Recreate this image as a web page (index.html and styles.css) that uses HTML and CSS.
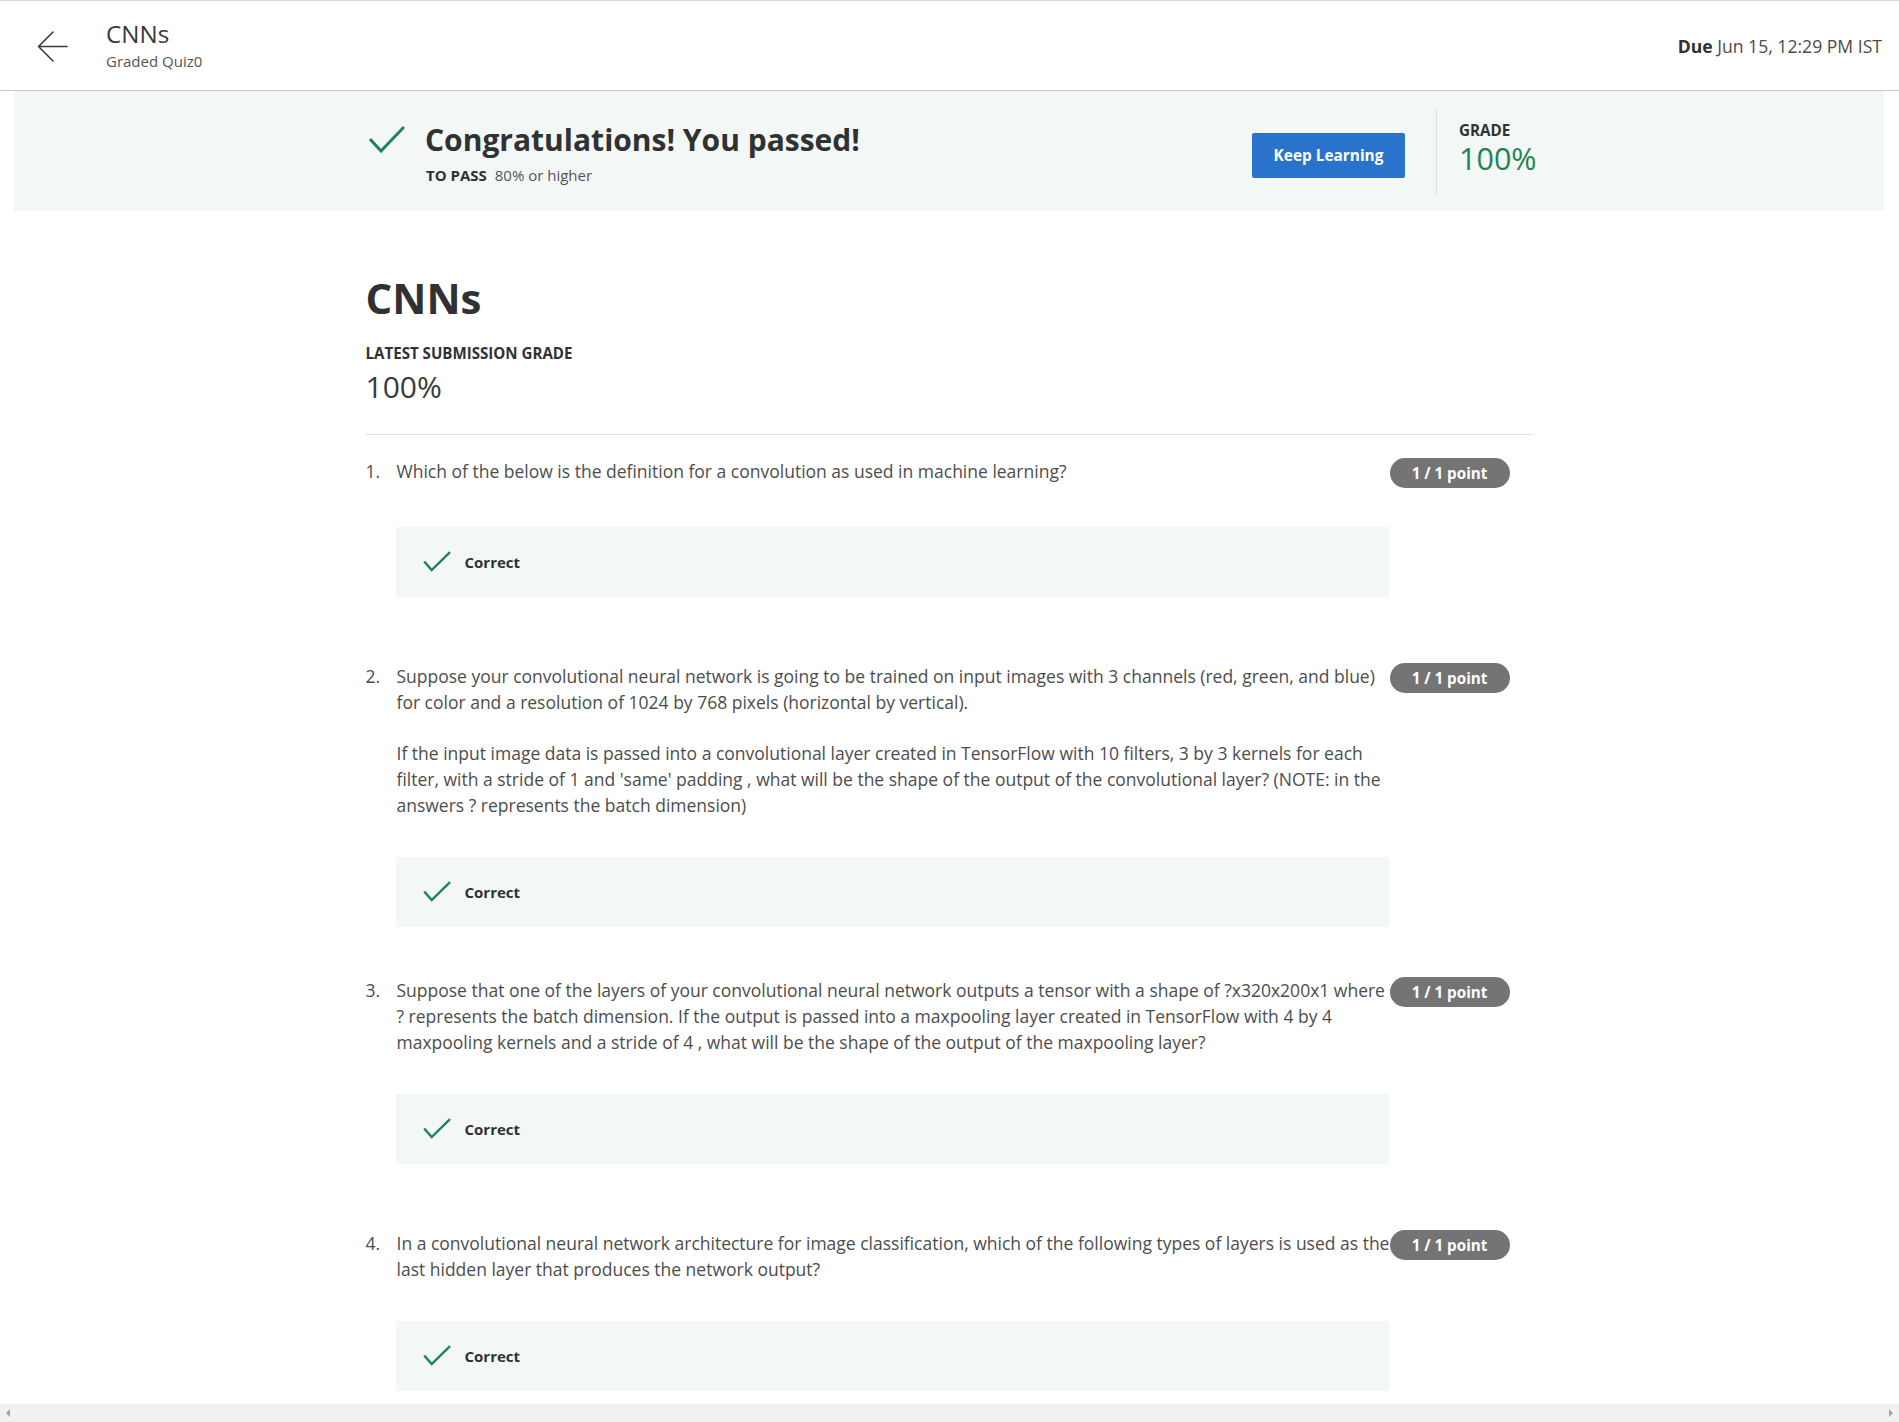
FILE: index.html
```html
<!DOCTYPE html>
<html lang="en">
<head>
<meta charset="utf-8">
<title>CNNs - Graded Quiz0</title>
<link rel="stylesheet" href="styles.css">
</head>
<body>
<div class="viewport">
  <header class="topbar">
    <a class="back" href="#" aria-label="Back">
      <svg width="31" height="31" viewBox="0 0 31 31" fill="none" stroke="#3c3c3c" stroke-width="1.6" stroke-linecap="round" stroke-linejoin="round"><path d="M30 15.5H1.5M16 1L1.5 15.5L16 30"/></svg>
    </a>
    <div class="title-block">
      <div class="title">CNNs</div>
      <div class="subtitle">Graded Quiz0</div>
    </div>
    <div class="due"><b>Due</b> Jun 15, 12:29 PM IST</div>
  </header>

  <section class="banner">
    <div class="banner-inner">
      <div class="pass">
        <svg class="pass-check" width="36" height="28" viewBox="0 0 36 28" fill="none" stroke="#1f8354" stroke-width="3"><path d="M1 14L12 26L35 2"/></svg>
        <div class="pass-text">
          <h2 class="pass-title">Congratulations! You passed!</h2>
          <div class="to-pass"><b>TO PASS</b> 80% or higher</div>
        </div>
      </div>
      <button class="btn-primary">Keep Learning</button>
      <div class="vdivider"></div>
      <div class="grade">
        <div class="grade-label">GRADE</div>
        <div class="grade-value">100%</div>
      </div>
    </div>
  </section>

  <main class="content">
    <h1 class="quiz-title">CNNs</h1>
    <div class="latest-label">LATEST SUBMISSION GRADE</div>
    <div class="latest-value">100%</div>
    <hr class="sep">

    <ol class="questions">
      <li class="question">
        <div class="q-row">
          <span class="q-num">1.</span>
          <div class="q-body">
            <p>Which of the below is the definition for a convolution as used in machine learning?</p>
          </div>
          <span class="points">1 / 1 point</span>
        </div>
        <div class="feedback">
          <svg width="28" height="21" viewBox="0 0 28 21" fill="none" stroke="#1f8354" stroke-width="2.4"><path d="M1.2 10.5L8.7 19L27 1.2"/></svg>
          <span>Correct</span>
        </div>
      </li>
      <li class="question question-tight">
        <div class="q-row">
          <span class="q-num">2.</span>
          <div class="q-body">
            <p>Suppose your convolutional neural network is going to be trained on input images with 3 channels (red, green, and blue) for color and a resolution of 1024 by 768 pixels (horizontal by vertical).</p>
            <p>If the input image data is passed into a convolutional layer created in TensorFlow with 10 filters, 3 by 3 kernels for each filter, with a stride of 1 and 'same' padding , what will be the shape of the output of the convolutional layer? (NOTE: in the answers ? represents the batch dimension)</p>
          </div>
          <span class="points">1 / 1 point</span>
        </div>
        <div class="feedback">
          <svg width="28" height="21" viewBox="0 0 28 21" fill="none" stroke="#1f8354" stroke-width="2.4"><path d="M1.2 10.5L8.7 19L27 1.2"/></svg>
          <span>Correct</span>
        </div>
      </li>
      <li class="question">
        <div class="q-row">
          <span class="q-num">3.</span>
          <div class="q-body">
            <p>Suppose that one of the layers of your convolutional neural network outputs a tensor with a shape of ?x320x200x1 where ? represents the batch dimension. If the output is passed into a maxpooling layer created in TensorFlow with 4 by 4 maxpooling kernels and a stride of 4 , what will be the shape of the output of the maxpooling layer?</p>
          </div>
          <span class="points">1 / 1 point</span>
        </div>
        <div class="feedback">
          <svg width="28" height="21" viewBox="0 0 28 21" fill="none" stroke="#1f8354" stroke-width="2.4"><path d="M1.2 10.5L8.7 19L27 1.2"/></svg>
          <span>Correct</span>
        </div>
      </li>
      <li class="question">
        <div class="q-row">
          <span class="q-num">4.</span>
          <div class="q-body">
            <p>In a convolutional neural network architecture for image classification, which of the following types of layers is used as the last hidden layer that produces the network output?</p>
          </div>
          <span class="points">1 / 1 point</span>
        </div>
        <div class="feedback">
          <svg width="28" height="21" viewBox="0 0 28 21" fill="none" stroke="#1f8354" stroke-width="2.4"><path d="M1.2 10.5L8.7 19L27 1.2"/></svg>
          <span>Correct</span>
        </div>
      </li>
    </ol>
  </main>
</div>
<div class="hscroll">
  <span class="arrow-left"></span>
  <span class="arrow-right"></span>
</div>
</body>
</html>
```

FILE: styles.css
```css
* { box-sizing: border-box; }

html, body {
  margin: 0;
  height: 100%;
}

body {
  display: flex;
  flex-direction: column;
  overflow: hidden;
  background: #fff;
  font-family: "Open Sans", "Liberation Sans", sans-serif;
  color: #373a3c;
}

.viewport {
  flex: 1;
  overflow: hidden;
}

/* Header */
.topbar {
  height: 91px;
  display: flex;
  align-items: center;
  border-top: 1px solid #dcdcdc;
  border-bottom: 1px solid #c9c9c9;
  padding: 0 17px 0 37px;
}

.back {
  display: flex;
  width: 31px;
  height: 31px;
  margin-top: 2px;
}

.title-block {
  margin-left: 38px;
  display: flex;
  flex-direction: column;
  margin-top: -2px;
}

.title {
  font-size: 24.2px;
  line-height: 30px;
  color: #3a3a3a;
}

.subtitle {
  margin-top: 2px;
  font-size: 15px;
  line-height: 20px;
  color: #555;
}

.due {
  margin-left: auto;
  font-size: 17.6px;
  color: #4c4c4c;
}

.due b {
  font-weight: 700;
  color: #2f3133;
}

/* Banner */
.banner {
  margin: 0 15px 0 14px;
  height: 120px;
  background: #f3f8f6;
  display: flex;
  align-items: center;
}

.banner-inner {
  width: 1168px;
  margin: 0 auto;
  display: flex;
  align-items: center;
}

.pass {
  display: flex;
  align-items: flex-start;
}

.pass-check {
  margin: 8px 20px 0 4px;
  flex-shrink: 0;
}

.pass-title {
  margin: 5px 0 0;
  font-size: 30px;
  line-height: 36px;
  font-weight: 700;
  color: #2f3133;
}

.to-pass {
  margin-top: 7px;
  font-size: 15px;
  line-height: 20px;
  color: #555;
  padding-left: 1px;
}

.to-pass b {
  color: #2f3133;
  margin-right: 4px;
}

.btn-primary {
  margin-left: auto;
  width: 153px;
  height: 45px;
  border: 0;
  border-radius: 2px;
  background: #2a73cc;
  color: #fff;
  font-family: inherit;
  font-weight: 700;
  font-size: 15.4px;
  margin-top: 8px;
}

.vdivider {
  width: 1px;
  height: 85px;
  background: #dcdcdc;
  margin: 0 22px 0 31px;
}

.grade {
  width: 74px;
  margin-top: -6px;
}

.grade-label {
  font-size: 15.2px;
  line-height: 20px;
  font-weight: 700;
  color: #2f3133;
}

.grade-value {
  font-size: 30.5px;
  line-height: 36px;
  color: #1f8354;
  white-space: nowrap;
}

/* Content */
.content {
  width: 1168px;
  margin: 0 auto;
  padding-top: 60px;
}

.quiz-title {
  margin: 0;
  font-size: 42px;
  line-height: 53px;
  font-weight: 700;
  color: #2f3133;
}

.latest-label {
  margin-top: 18px;
  font-size: 15.1px;
  line-height: 22px;
  font-weight: 700;
  color: #2f3133;
}

.latest-value {
  margin-top: 3px;
  font-size: 30px;
  line-height: 40px;
  font-weight: 400;
  color: #3a3a3a;
}

.sep {
  margin: 27px 0 0;
  border: 0;
  border-top: 1px solid #e1e1e1;
}

.questions {
  list-style: none;
  margin: 23px 0 0;
  padding: 0;
}

.question {
  margin-bottom: 66px;
}

.question-tight {
  margin-bottom: 50px;
}

.q-row {
  display: flex;
  align-items: flex-start;
  padding-right: 24px;
  font-size: 17.5px;
  line-height: 26px;
  color: #4d4d4d;
}

.q-num {
  width: 31px;
  flex-shrink: 0;
}

.q-body {
  flex: 1;
}

.q-body p {
  margin: 0 0 25px;
}

.q-body p:last-child {
  margin-bottom: 0;
}

.points {
  flex-shrink: 0;
  width: 120px;
  height: 30px;
  border-radius: 15px;
  background: #747474;
  color: #fff;
  font-size: 15.2px;
  font-weight: 700;
  line-height: 30px;
  text-align: center;
}

.feedback {
  margin: 39px 0 0 30px;
  width: 993px;
  height: 70px;
  background: #f3f8f6;
  display: flex;
  align-items: center;
  padding-left: 27px;
}

.feedback svg {
  margin-top: -2px;
}

.feedback span {
  margin-left: 14px;
  font-size: 15px;
  font-weight: 700;
  color: #2f3133;
}

/* Bottom horizontal scrollbar */
.hscroll {
  height: 18px;
  flex-shrink: 0;
  background: #f1f1f1;
  display: flex;
  align-items: center;
  justify-content: space-between;
  padding: 0 6px;
}

.arrow-left {
  width: 0;
  height: 0;
  border-top: 4px solid transparent;
  border-bottom: 4px solid transparent;
  border-right: 4px solid #a3a3a3;
}

.arrow-right {
  width: 0;
  height: 0;
  border-top: 4px solid transparent;
  border-bottom: 4px solid transparent;
  border-left: 4px solid #a3a3a3;
}
```
